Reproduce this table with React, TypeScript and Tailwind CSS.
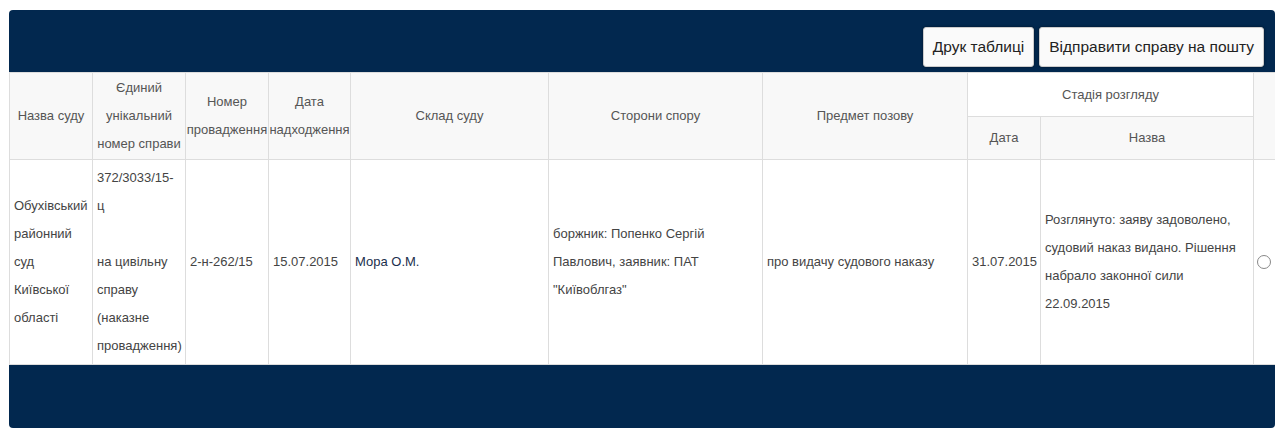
const cols = [83, 93, 83, 82, 198, 214, 205, 73, 213, 22];

const th = "border border-[#dddddd] bg-[#f8f8f8] text-center align-middle font-normal text-[13px] leading-[28px] text-[#555555]";
const td = "border border-[#dddddd] bg-white align-middle px-1 py-1 text-[13px] leading-[28px] text-[#444444]";

export default function App() {
  return (
    <div className="min-h-[435px] bg-white pt-[10px] pl-[9px]" style={{ fontFamily: '"Liberation Sans", Arial, sans-serif' }}>
      <div className="w-[1266px] overflow-hidden rounded-[4px] bg-[#02284f]">
        <div className="flex h-[62px] items-end justify-end gap-[5px] pr-[11px] pb-[5px]">
          <button className="h-[40px] rounded-[3px] border border-[#cccccc] bg-[#fafafa] px-[9px] text-[15.5px] text-[#222222] shadow-[0_0_3px_rgba(0,0,0,0.5)]">
            Друк таблиці
          </button>
          <button className="h-[40px] rounded-[3px] border border-[#cccccc] bg-[#fafafa] px-[9px] text-[15.5px] text-[#222222] shadow-[0_0_3px_rgba(0,0,0,0.5)]">
            Відправити справу на пошту
          </button>
        </div>
        <table className="w-[1266px] table-fixed border-collapse">
          <colgroup>
            {cols.map((w, i) => (
              <col key={i} style={{ width: w }} />
            ))}
          </colgroup>
          <thead>
            <tr className="h-[44px]">
              <th rowSpan={2} className={th + " px-1"}>Назва суду</th>
              <th rowSpan={2} className={th + " px-1"}>Єдиний унікальний номер справи</th>
              <th rowSpan={2} className={th + " whitespace-nowrap"}>Номер<br />провадження</th>
              <th rowSpan={2} className={th + " whitespace-nowrap"}>Дата<br />надходження</th>
              <th rowSpan={2} className={th}>Склад суду</th>
              <th rowSpan={2} className={th}>Сторони спору</th>
              <th rowSpan={2} className={th}>Предмет позову</th>
              <th colSpan={2} className={th + " !bg-white"}>Стадія розгляду</th>
              <th rowSpan={2} className={th}></th>
            </tr>
            <tr className="h-[43px]">
              <th className={th}>Дата</th>
              <th className={th}>Назва</th>
            </tr>
          </thead>
          <tbody>
            <tr className="h-[205px]">
              <td className={td}>Обухівський районний суд Київської області</td>
              <td className={td}>
                372/3033/15-ц
                <br />
                <br />
                на цивільну справу (наказне провадження)
              </td>
              <td className={td}>2-н-262/15</td>
              <td className={td}>15.07.2015</td>
              <td className={td + " !text-[#1b2f4d]"}>Мора О.М.</td>
              <td className={td}>боржник: Попенко Сергій Павлович, заявник: ПАТ "Київоблгаз"</td>
              <td className={td}>про видачу судового наказу</td>
              <td className={td + " whitespace-nowrap"}>31.07.2015</td>
              <td className={td}>Розглянуто: заяву задоволено, судовий наказ видано. Рішення набрало законної сили 22.09.2015</td>
              <td className="border-y border-l border-[#dddddd] bg-white align-middle">
                <div className="ml-[3px] h-[14px] w-[14px] rounded-full border border-[#888888] bg-white" />
              </td>
            </tr>
          </tbody>
        </table>
        <div className="h-[63px]" />
      </div>
    </div>
  );
}
